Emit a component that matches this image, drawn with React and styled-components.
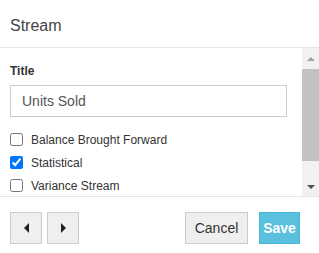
import React from 'react';
import styled, { createGlobalStyle } from 'styled-components';

const GlobalStyle = createGlobalStyle`
    html, body {
        margin: 0;
        padding: 0;
        background: #fff;
    }
    body {
        font-family: "Liberation Sans", Arial, sans-serif;
    }
`

const Dialog = styled.div`
    width: 319px;
    height: 253px;
    display: flex;
    flex-direction: column;
    background: #fff;
`

const Header = styled.div`
    height: 43px;
    display: flex;
    align-items: center;
    padding: 4px 0 0 10px;
    font-size: 16px;
    color: #444;
    border-bottom: 1px solid #e5e5e5;
    box-sizing: content-box;
`

const Body = styled.div`
    height: 148px;
    display: flex;
    border-bottom: 1px solid #e5e5e5;
`

const Content = styled.div`
    flex: 1;
    overflow: hidden;
    padding: 16px 15px 0 10px;
`

const Label = styled.div`
    font-size: 12px;
    font-weight: 700;
    color: #333;
    height: 15px;
    line-height: 15px;
    margin-bottom: 6px;
`

const Input = styled.div`
    width: 277px;
    height: 32px;
    box-sizing: border-box;
    border: 1px solid #ccc;
    display: flex;
    align-items: center;
    padding-left: 11px;
    font-size: 14px;
    color: #555;
    margin-bottom: 11px;
`

const CheckRow = styled.label`
    display: flex;
    align-items: center;
    gap: 8px;
    height: 23px;
    font-size: 12px;
    color: #333;

    input {
        margin: 0;
        width: 13px;
        height: 13px;
    }
`

const Scrollbar = styled.div`
    width: 17px;
    background: #f1f1f1;
    display: flex;
    flex-direction: column;
`

const Arrow = styled.div`
    height: ${p => p.$h}px;
    display: flex;
    align-items: center;
    justify-content: center;
`

const Track = styled.div`
    flex: 1;
    display: flex;
    flex-direction: column;
`

const Thumb = styled.div`
    height: 92px;
    background: #c1c1c1;
`

const Footer = styled.div`
    flex: 1;
    display: flex;
    align-items: flex-start;
    padding: 15px 19px 0 10px;
`

const NavGroup = styled.div`
    display: flex;
    gap: 5px;
`

const Button = styled.div`
    height: 32px;
    box-sizing: border-box;
    display: flex;
    align-items: center;
    justify-content: center;
    font-size: 14px;
    border: 1px solid ${p => p.$primary ? '#46b8da' : '#ccc'};
    background: ${p => p.$primary ? '#5bc0de' : '#efefef'};
    color: ${p => p.$primary ? '#fff' : '#333'};
    font-weight: ${p => p.$primary ? 700 : 400};
    width: ${p => p.$w}px;
`

const Actions = styled.div`
    margin-left: auto;
    display: flex;
    gap: 11px;
`

const Tri = ({ dir, size = 4, color = '#222' }) => {
    const pts = {
        left: `${size},0 ${size},${size * 2} 0,${size}`,
        right: `0,0 0,${size * 2} ${size},${size}`,
        up: `0,${size} ${size * 2},${size} ${size},0`,
        down: `0,0 ${size * 2},0 ${size},${size}`,
    }[dir];
    const horiz = dir === 'left' || dir === 'right';
    return (
        <svg width={horiz ? size : size * 2} height={horiz ? size * 2 : size}>
            <polygon points={pts} fill={color} />
        </svg>
    );
};

const App = () => {
    return (
        <Dialog>
            <GlobalStyle />
            <Header>Stream</Header>
            <Body>
                <Content>
                    <Label>Title</Label>
                    <Input>Units Sold</Input>
                    <CheckRow><input type="checkbox" readOnly />Balance Brought Forward</CheckRow>
                    <CheckRow><input type="checkbox" defaultChecked />Statistical</CheckRow>
                    <CheckRow><input type="checkbox" readOnly />Variance Stream</CheckRow>
                </Content>
                <Scrollbar>
                    <Arrow $h={21}><Tri dir="up" color="#a3a3a3" /></Arrow>
                    <Track>
                        <Thumb />
                    </Track>
                    <Arrow $h={19}><Tri dir="down" color="#505050" /></Arrow>
                </Scrollbar>
            </Body>
            <Footer>
                <NavGroup>
                    <Button $w={32}><Tri dir="left" size={5} /></Button>
                    <Button $w={32}><Tri dir="right" size={5} /></Button>
                </NavGroup>
                <Actions>
                    <Button $w={63}>Cancel</Button>
                    <Button $w={41} $primary>Save</Button>
                </Actions>
            </Footer>
        </Dialog>
    );
};

export default App;
